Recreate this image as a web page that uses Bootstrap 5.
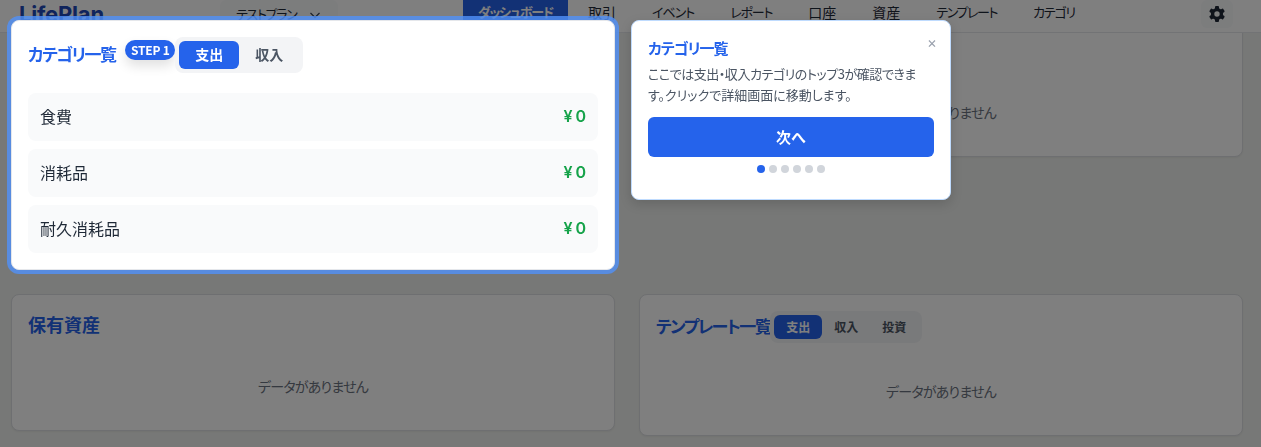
<!doctype html>
<html lang="ja"><head><meta charset="utf-8"><title>LifePlan</title>
<link href="https://cdn.jsdelivr.net/npm/bootstrap@5.3.0/dist/css/bootstrap.min.css" rel="stylesheet">
<style>
html,body{height:447px;overflow:hidden}
body{background:#eff1ee;font-family:"Noto Sans CJK JP","Inter",sans-serif;font-feature-settings:"palt";color:#1f2937}
.lp-nav{height:33px;background:#fff;border-bottom:1px solid #e5e7eb;z-index:1030}
.lp-logo{font:700 22px/28px "Inter",sans-serif;color:#2148b8;margin-left:19px;width:201px;letter-spacing:-.2px}
.lp-plan{width:118px;height:28px;padding-left:16px;background:#f9fafb;border-radius:6px;font-size:13px;line-height:24px;color:#1f2937;letter-spacing:-1.3px;white-space:nowrap}
.lp-chev{margin-left:13px;margin-top:2px}
.lp-links{margin-left:125px;font-size:14px;color:#1f2937}
.lp-link{padding:0 18px;line-height:24px;white-space:nowrap}
.lp-link.on{background:#2563eb;color:#fff;font-size:13px;font-weight:700;border-radius:0 0 4px 4px;width:105px;padding:0;text-align:center;margin-right:2px;height:27px;letter-spacing:-1.2px}
.lp-link.kana{font-size:13px;letter-spacing:-1.2px}
.lp-link.kana.wide{letter-spacing:-1.4px}
.lp-link.ev{font-size:13px;letter-spacing:-1px}
.lp-gear{position:absolute;left:1201px;top:0;width:32px;height:28px;background:#f9fafb;border-radius:6px}
.lp-main{padding:20px 18px 0 11px;display:grid;grid-template-columns:604px 604px;column-gap:24px;row-gap:24px;align-items:start}
.lp-card{background:#fff;border:1px solid #dcdee2;border-radius:8px;padding:16px;box-shadow:0 1px 2px rgba(0,0,0,.05)}
.lp-head{margin-bottom:20px}
.lp-head.blank{height:27px}
.lp-title{font-size:18px;font-weight:600;line-height:27px;color:#2563eb;white-space:nowrap}
.lp-title.kana{font-size:17px;letter-spacing:-1.6px;padding-bottom:3px}
.lp-empty{padding:16px 0;text-align:center;color:#6b7280;font-size:14px;line-height:24px;letter-spacing:-.8px}
.lp-top{position:relative;z-index:1050;border-color:#e5e7eb;box-shadow:0 0 0 4px rgba(80,145,250,.8)}
.lp-seg{background:#f3f4f6;border-radius:8px;padding:4px;display:flex}
.lp-seg span{width:60px;height:28px;line-height:27px;text-align:center;font-size:14px;font-weight:600;color:#4b5563;border-radius:6px}
.lp-seg span.on{background:#2563eb;color:#fff}
.lp-seg.sm span{width:48px;height:24px;line-height:23px;font-size:12px}
.lp-step{width:50px;height:20px;margin:3px 0 0 10px;background:#2563eb;color:#fff;border-radius:10px;font-size:12px;font-weight:700;line-height:19px;letter-spacing:-.2px;text-align:center;box-shadow:0 6px 12px rgba(0,0,0,.12);flex:none;white-space:nowrap}
.lp-row{height:48px;background:#f9fafb;border-radius:8px;padding:0 12px 2px;margin-bottom:8px;font-size:16px;color:#1f2937}
.lp-row:last-child{margin-bottom:0}
.lp-amt{color:#16a34a;font-weight:600;font-family:"Inter",sans-serif;letter-spacing:3px;margin-right:-3px}
.lp-over{position:fixed;inset:0;background:rgba(0,0,0,.5);z-index:1040}
.lp-pop{position:absolute;left:631px;top:20px;width:320px;height:180px;background:#fff;border:1px solid #bfdbfe;border-radius:8px;padding:15px 16px 16px;z-index:1060;box-shadow:0 4px 12px rgba(0,0,0,.15)}
.lp-pop h6{font-size:15px;line-height:24px;font-weight:600;color:#2563eb;margin:0 0 3px;letter-spacing:-1px}
.lp-pop p{font-size:13px;line-height:21px;color:#4b5563;margin:0 0 12px;white-space:nowrap}
.lp-line{letter-spacing:-.45px}
.lp-x{position:absolute;right:13px;top:10px;font:400 15px/24px "Inter",sans-serif;color:#9ca3af}
.lp-next{display:block;width:100%;height:40px;background:#2563eb;color:#fff;border:0;border-radius:6px;font-size:15px;font-weight:700;padding:0}
.lp-dots{display:flex;justify-content:center;gap:4px;margin-top:8px}
.lp-dots i{width:8px;height:8px;border-radius:50%;background:#d1d5db}
.lp-dots i.on{background:#2563eb}
</style></head><body>
<nav class="lp-nav position-fixed top-0 start-0 end-0 d-flex align-items-start">
 <div class="lp-logo">LifePlan</div>
 <div class="lp-plan d-flex align-items-center">テストプラン
  <svg class="lp-chev" width="12" height="12" viewBox="0 0 12 12" fill="none" stroke="#374151" stroke-width="1.2"><path d="M1.5 4l4.5 4.5L10.5 4"/></svg></div>
 <div class="lp-links d-flex">
  <span class="lp-link on">ダッシュボード</span><span class="lp-link">取引</span><span class="lp-link ev">イベント</span><span class="lp-link kana">レポート</span><span class="lp-link">口座</span><span class="lp-link">資産</span><span class="lp-link kana wide">テンプレート</span><span class="lp-link kana">カテゴリ</span>
 </div>
 <div class="lp-gear d-flex justify-content-center align-items-center">
  <svg width="16" height="16" viewBox="0 0 16 16" fill="#1f2937"><circle cx="8" cy="8" r="4.4" fill="none" stroke="#1f2937" stroke-width="3.4"/><rect x="6" y="0" width="4" height="4" rx="1"/><rect x="6" y="0" width="4" height="4" rx="1" transform="rotate(60 8 8)"/><rect x="6" y="0" width="4" height="4" rx="1" transform="rotate(120 8 8)"/><rect x="6" y="0" width="4" height="4" rx="1" transform="rotate(180 8 8)"/><rect x="6" y="0" width="4" height="4" rx="1" transform="rotate(240 8 8)"/><rect x="6" y="0" width="4" height="4" rx="1" transform="rotate(300 8 8)"/></svg>
 </div>
</nav>
<main class="lp-main">
 <section class="lp-card lp-top">
  <div class="lp-head d-flex align-items-center">
   <div class="lp-title kana">カテゴリ一覧</div><div class="lp-step align-self-start">STEP 1</div>
   <div class="lp-seg"><span class="on">支出</span><span>収入</span></div>
  </div>
  <div class="lp-row d-flex justify-content-between align-items-center"><span>食費</span><span class="lp-amt">¥0</span></div>
  <div class="lp-row d-flex justify-content-between align-items-center"><span>消耗品</span><span class="lp-amt">¥0</span></div>
  <div class="lp-row d-flex justify-content-between align-items-center"><span>耐久消耗品</span><span class="lp-amt">¥0</span></div>
 </section>
 <section class="lp-card">
  <div class="lp-head blank"></div>
  <div class="lp-empty">データがありません</div>
 </section>
 <section class="lp-card">
  <div class="lp-head"><div class="lp-title">保有資産</div></div>
  <div class="lp-empty">データがありません</div>
 </section>
 <section class="lp-card">
  <div class="lp-head d-flex align-items-center">
   <div class="lp-title kana">テンプレート一覧</div>
   <div class="lp-seg sm"><span class="on">支出</span><span>収入</span><span>投資</span></div>
  </div>
  <div class="lp-empty">データがありません</div>
 </section>
</main>
<div class="lp-over"></div>
<aside class="lp-pop">
 <h6>カテゴリ一覧</h6>
 <span class="lp-x">×</span>
 <p><span class="lp-line">ここでは支出・収入カテゴリのトップ3が確認できま</span><br>す。クリックで詳細画面に移動します。</p>
 <button class="lp-next" type="button">次へ</button>
 <div class="lp-dots"><i class="on"></i><i></i><i></i><i></i><i></i><i></i></div>
</aside>
<script src="https://cdn.jsdelivr.net/npm/bootstrap@5.3.0/dist/js/bootstrap.bundle.min.js"></script>
</body></html>
